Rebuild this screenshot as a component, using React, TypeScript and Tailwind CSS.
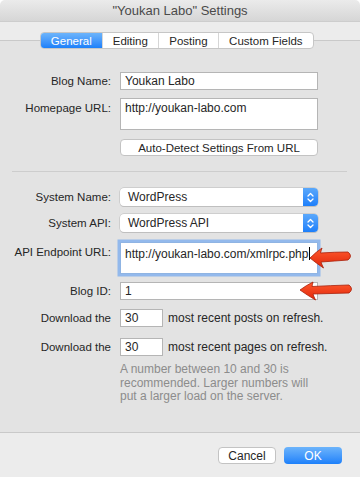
import React from 'react'

const tabs = [
  { label: 'General', w: 'w-[61px]', active: true },
  { label: 'Editing', w: 'w-[57px]', active: false },
  { label: 'Posting', w: 'w-[60px]', active: false },
  { label: 'Custom Fields', w: 'w-[96px]', active: false },
]

function Label({ children, top }: { children: React.ReactNode; top?: boolean }) {
  return (
    <div className={`w-[120px] shrink-0 pr-[9px] text-right text-[11.5px] ${top ? 'self-start pt-[3px]' : ''}`}>
      {children}
    </div>
  )
}

function Select({ value }: { value: string }) {
  return (
    <div className="flex h-[18px] w-[198px] items-center rounded-[4px] bg-white shadow-[0_0_0_0.5px_#b9b9b9,0_1px_0_0_#c4c4c4]">
      <span className="flex-1 pl-[8px]">{value}</span>
      <span className="flex h-full w-[15px] items-center justify-center rounded-r-[4px] bg-gradient-to-b from-[#5aa8fb] to-[#1c7ffa]">
        <svg width="7" height="11" viewBox="0 0 7 11" fill="none" stroke="white" strokeWidth="1.3" strokeLinecap="round" strokeLinejoin="round">
          <path d="M1 4 L3.5 1.5 L6 4" />
          <path d="M1 7 L3.5 9.5 L6 7" />
        </svg>
      </span>
    </div>
  )
}

function Arrows() {
  return (
    <svg className="pointer-events-none absolute left-0 top-0" width="360" height="477" viewBox="0 0 360 477">
      <defs>
        <linearGradient id="ar" x1="0" y1="0" x2="0" y2="1">
          <stop offset="0" stopColor="#ff5a2e" />
          <stop offset="1" stopColor="#e0260a" />
        </linearGradient>
      </defs>
      <path
        d="M310 258 Q316 252 322 248 Q321 251 320.5 253 Q335 252 348 252 Q353 256 348 260 Q335 261 321 262 Q322 265 323.5 268 Q316 263 310 258 Z"
        fill="url(#ar)"
        stroke="#a8200a"
        strokeWidth="0.8"
      />
      <path
        d="M300 290 Q306 285.5 313 282 Q312.5 284.5 312 286.5 Q331 285.5 349 285 Q354 289 349 293 Q331 293.5 313 294 Q314 297 315.5 300 Q307 295 300 290 Z"
        fill="url(#ar)"
        stroke="#a8200a"
        strokeWidth="0.8"
      />
    </svg>
  )
}

export default function App() {
  return (
    <div className="relative h-[477px] w-[360px] overflow-hidden bg-white font-['Liberation_Sans',Arial,sans-serif] text-[12px] leading-[14px] text-[#262626]">
      <div className="flex h-[22px] items-center justify-center rounded-t-[5px] border-b border-[#cdcdcd] bg-gradient-to-b from-[#ebebeb] to-[#d6d6d6] text-[13px] text-[#4a4a4a]">
        "Youkan Labo" Settings
      </div>

      <div className="h-[18px] bg-[#ececec] pt-[10px]">
        <div className="relative z-10 ml-[40px] flex h-[17px] w-[274px] overflow-hidden rounded-[4px] border border-[#c6c6c6] bg-white text-[11.5px]">
          {tabs.map((t, i) => (
            <div
              key={t.label}
              className={[
                t.w,
                'flex items-center justify-center',
                i > 0 ? 'border-l border-[#d6d6d6]' : '',
                t.active ? 'bg-gradient-to-b from-[#6cb4fb] to-[#1b80fa] text-white' : 'text-[#262626]',
              ].join(' ')}
            >
              {t.label}
            </div>
          ))}
        </div>
      </div>

      <div className="h-[393px] border-y border-[#c9c9c9] bg-[#e3e3e3] pt-[31px]">
        <div className="flex h-[18px] items-center">
          <Label>Blog Name:</Label>
          <div className="flex h-[18px] w-[198px] items-center border border-[#b5b5b5] bg-white pl-[4px]">Youkan Labo</div>
        </div>

        <div className="mt-[8px] flex h-[32px]">
          <Label top>Homepage URL:</Label>
          <div className="h-[32px] w-[198px] border border-[#b5b5b5] bg-white pl-[4px] pt-[2px]">http://youkan-labo.com</div>
        </div>

        <div className="ml-[120px] mt-[9px] flex h-[17px] w-[198px] items-center justify-center rounded-[4px] border border-[#c3c3c3] bg-white text-[11.5px]">
          Auto-Detect Settings From URL
        </div>

        <div className="mx-[12px] mt-[15px] h-px w-[335px] bg-[#cdcdcd]" />

        <div className="mt-[16px] flex h-[18px] items-center">
          <Label>System Name:</Label>
          <Select value="WordPress" />
        </div>

        <div className="mt-[8px] flex h-[18px] items-center">
          <Label>System API:</Label>
          <Select value="WordPress API" />
        </div>

        <div className="mt-[10px] flex h-[32px]">
          <Label top>API Endpoint URL:</Label>
          <div className="h-[32px] w-[198px] border border-[#8fb4e3] bg-white pl-[4px] pt-[2px] shadow-[0_0_0_2.5px_#93b9ec]">
            http://youkan-labo.com/xmlrpc.php<span className="ml-px inline-block h-[13px] w-px translate-y-[2px] bg-black" />
          </div>
        </div>

        <div className="mt-[8px] flex h-[18px] items-center">
          <Label>Blog ID:</Label>
          <div className="flex h-[18px] w-[198px] items-center border border-[#b5b5b5] bg-white pl-[4px]">1</div>
        </div>

        <div className="mt-[9px] flex h-[18px] items-center">
          <Label>Download the</Label>
          <div className="flex h-[18px] w-[43px] items-center border border-[#b5b5b5] bg-white pl-[4px]">30</div>
          <span className="ml-[5px]">most recent posts on refresh.</span>
        </div>

        <div className="mt-[11px] flex h-[18px] items-center">
          <Label>Download the</Label>
          <div className="flex h-[18px] w-[43px] items-center border border-[#b5b5b5] bg-white pl-[4px]">30</div>
          <span className="ml-[5px]">most recent pages on refresh.</span>
        </div>

        <p className="ml-[120px] mt-[7px] leading-[13.5px] text-[#8c8c8c]">
          A number between 10 and 30 is
          <br />
          recommended. Larger numbers will
          <br />
          put a larger load on the server.
        </p>
      </div>

      <div className="flex h-[44px] justify-end gap-[8px] bg-[#ececec] pr-[18px] pt-[14px]">
        <div className="flex h-[17px] w-[58px] items-center justify-center rounded-[4px] border border-[#c3c3c3] bg-white">
          Cancel
        </div>
        <div className="flex h-[17px] w-[58px] items-center justify-center rounded-[4px] bg-gradient-to-b from-[#6cb4fb] to-[#1b80fa] text-white">
          OK
        </div>
      </div>

      <Arrows />
    </div>
  )
}
